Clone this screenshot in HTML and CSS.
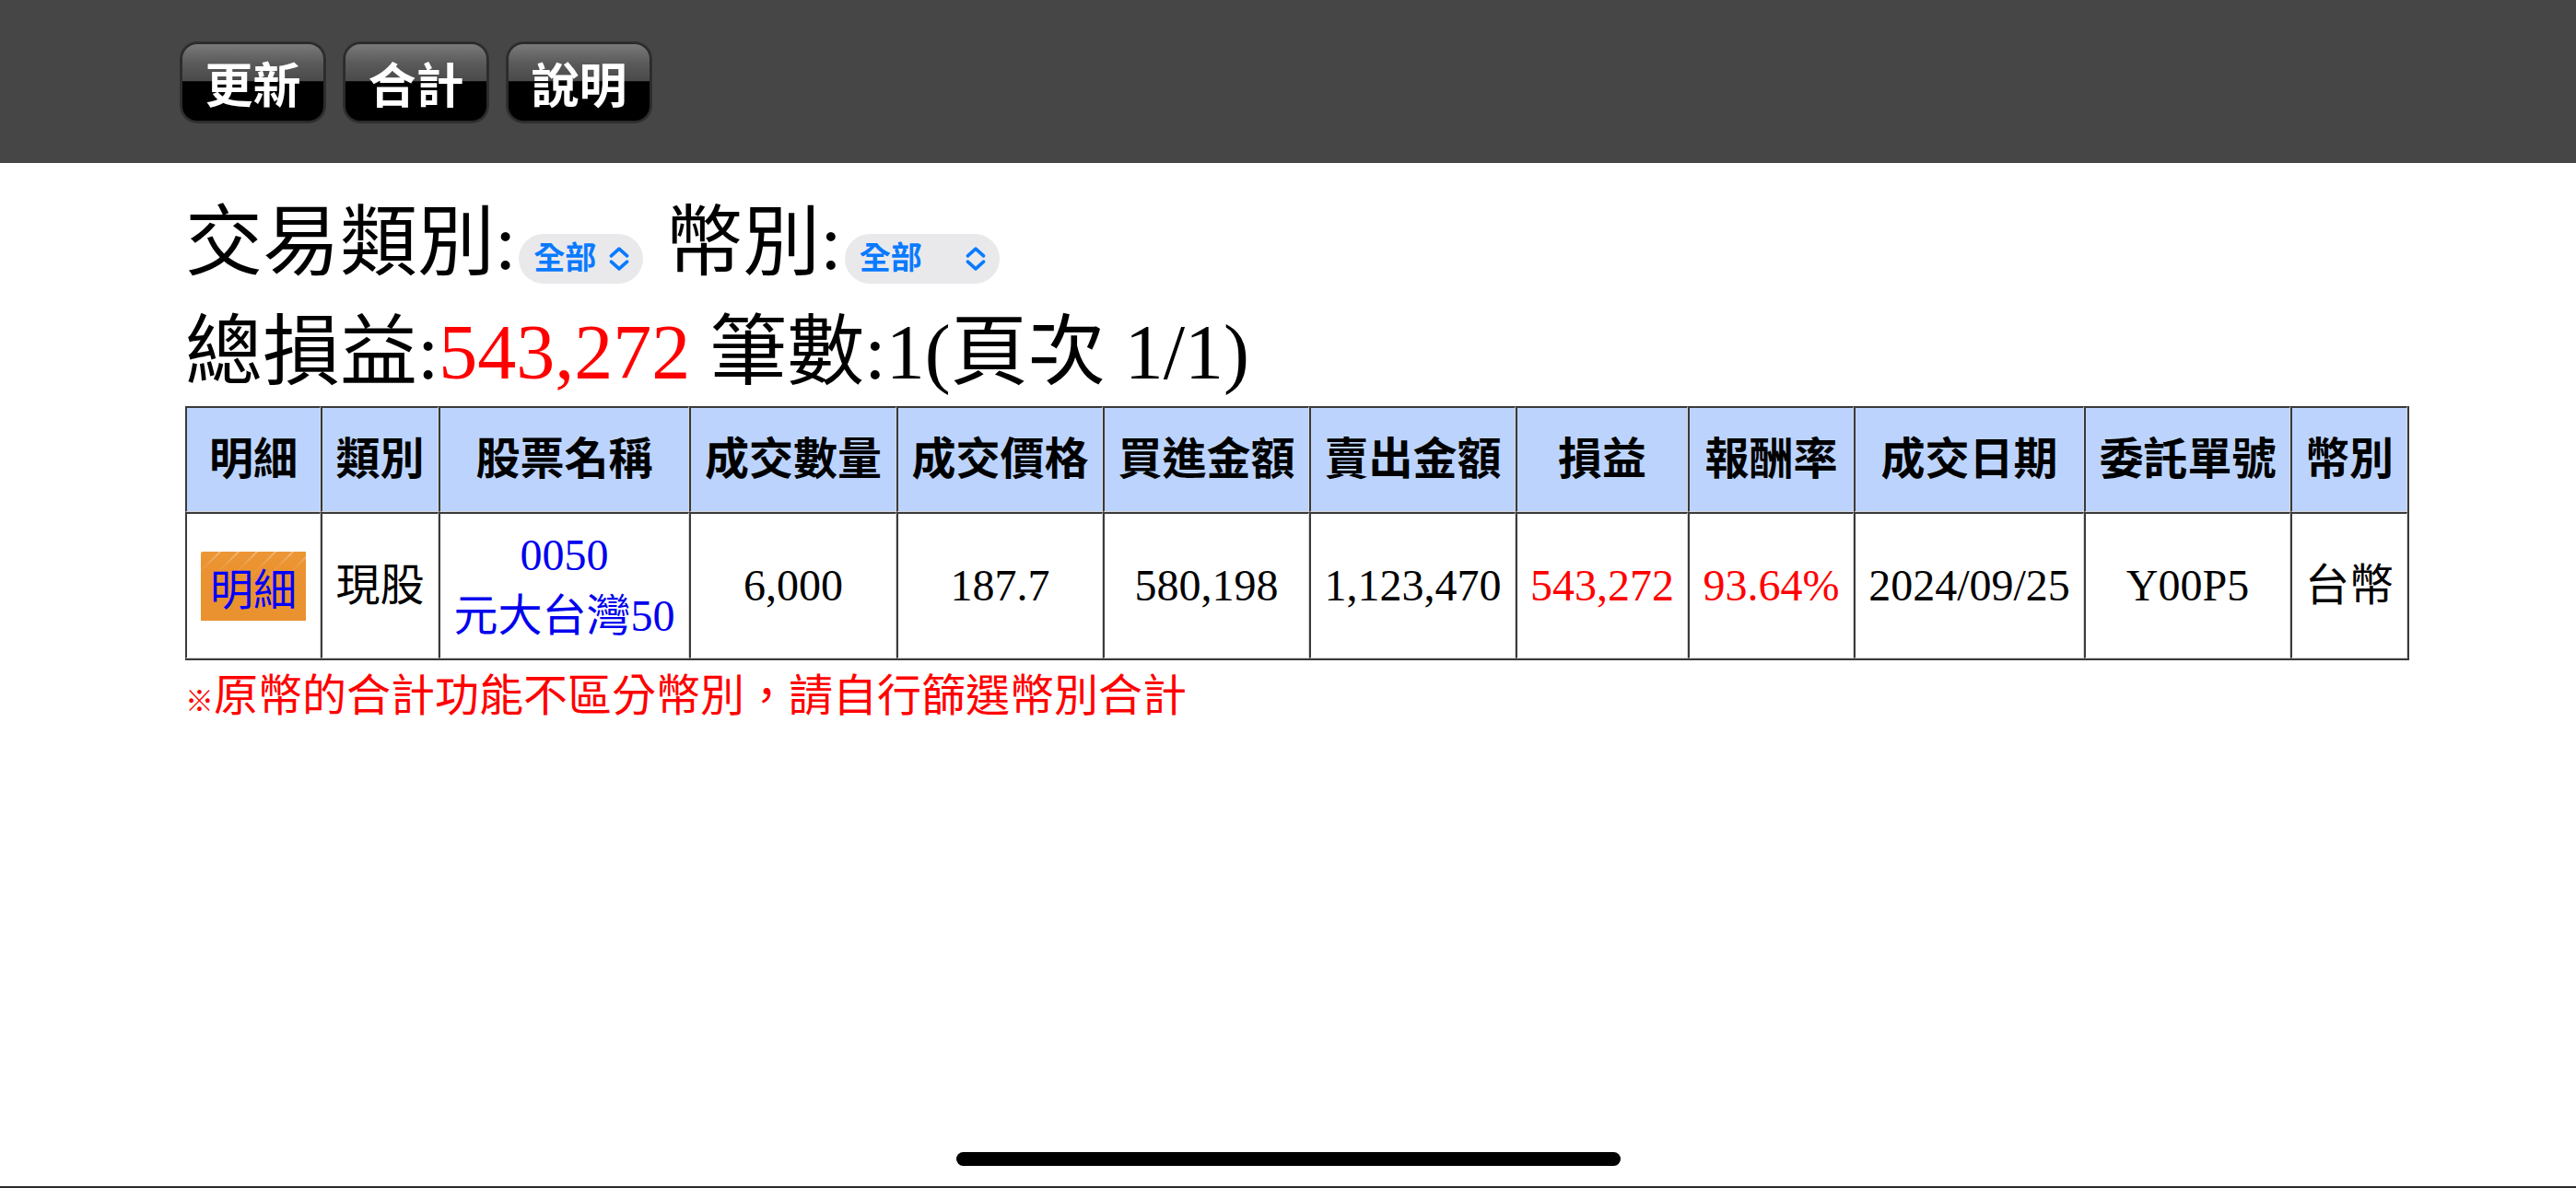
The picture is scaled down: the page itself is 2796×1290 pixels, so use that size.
FILE: index.html
```html
<!DOCTYPE html>
<html lang="zh-Hant">
<head>
<meta charset="utf-8">
<title>交易明細</title>
<link rel="stylesheet" href="styles.css">
</head>
<body>
<header class="topbar">
  <nav class="toolbar">
    <button class="tool-btn" type="button">更新</button>
    <button class="tool-btn" type="button">合計</button>
    <button class="tool-btn" type="button">說明</button>
  </nav>
</header>
<main class="content">
  <div class="filters">交易類別:<span class="sel sel-type"><span class="sel-text">全部</span><svg class="chev" viewBox="0 0 22 26" width="22" height="26"><polyline points="3,10 11,3 19,10"/><polyline points="3,16 11,23 19,16"/></svg></span> 幣別:<span class="sel sel-cur"><span class="sel-text">全部</span><svg class="chev" viewBox="0 0 22 26" width="22" height="26"><polyline points="3,10 11,3 19,10"/><polyline points="3,16 11,23 19,16"/></svg></span></div>
  <div class="summary">總損益:<span class="red">543,272</span> 筆數:1(頁次 1/1)</div>
  <table class="trades">
    <thead>
      <tr>
        <th class="w-detail">明細</th>
        <th class="w-kind">類別</th>
        <th class="w-name">股票名稱</th>
        <th class="w-qty">成交數量</th>
        <th class="w-price">成交價格</th>
        <th class="w-buy">買進金額</th>
        <th class="w-sell">賣出金額</th>
        <th class="w-pl">損益</th>
        <th class="w-ret">報酬率</th>
        <th class="w-date">成交日期</th>
        <th class="w-order">委託單號</th>
        <th class="w-cur">幣別</th>
      </tr>
    </thead>
    <tbody>
      <tr>
        <td><span class="detail-btn">明細</span></td>
        <td>現股</td>
        <td><a class="stock-link" href="#">0050<br>元大台灣50</a></td>
        <td>6,000</td>
        <td>187.7</td>
        <td>580,198</td>
        <td>1,123,470</td>
        <td class="red">543,272</td>
        <td class="red">93.64%</td>
        <td>2024/09/25</td>
        <td>Y00P5</td>
        <td>台幣</td>
      </tr>
    </tbody>
  </table>
  <p class="note"><span class="ref-mark">※</span>原幣的合計功能不區分幣別，請自行篩選幣別合計</p>
</main>
<div class="home-indicator"></div>
<div class="bottom-edge"></div>
</body>
</html>
```
FILE: styles.css
```css
* { box-sizing: border-box; }

html, body {
  margin: 0;
  padding: 0;
  background: #ffffff;
}

body {
  font-family: "Liberation Serif", "Noto Sans CJK TC", serif;
  color: #000;
  min-height: 1290px;
}

/* top bar */
.topbar {
  height: 177px;
  background: #464646;
  padding: 46px 0 0 196px;
}

.toolbar {
  display: flex;
  gap: 20px;
}

.tool-btn {
  width: 157px;
  height: 87px;
  padding: 0;
  border: 2px solid #2b2b2b;
  border-radius: 18px;
  background: linear-gradient(to bottom, #7a7a7a 0%, #5a5a5a 25%, #4a4a4a 48%, #000 49%, #000 100%);
  box-shadow: 0 0 0 1px rgba(0, 0, 0, 0.3);
  color: #fff;
  font-family: "Noto Sans CJK TC", sans-serif;
  font-size: 52px;
  font-weight: 700;
  line-height: 1;
  display: flex;
  align-items: center;
  justify-content: center;
}

/* content */
.content {
  padding: 27px 0 0 201px;
}

.filters {
  font-size: 84px;
  line-height: 120px;
  height: 120px;
  white-space: nowrap;
}

.sel {
  display: inline-flex;
  align-items: center;
  justify-content: space-between;
  height: 54px;
  border-radius: 27px;
  background: #e9e9eb;
  margin: 0 3px 0 3px;
  padding: 0 14px 0 16px;
  vertical-align: baseline;
}

.sel-type { width: 135px; }
.sel-cur { width: 168px; }

.sel-text {
  font-family: "Noto Sans CJK TC", sans-serif;
  font-size: 34px;
  font-weight: 700;
  line-height: 48px;
  color: #0a7aff;
  margin-bottom: 6px;
}

.chev {
  display: block;
  width: 24px;
  height: 28px;
  fill: none;
  stroke: #0a7aff;
  stroke-width: 3.4;
  stroke-linecap: round;
  stroke-linejoin: round;
}

.summary {
  font-size: 84px;
  line-height: 117px;
  white-space: nowrap;
}

.red { color: #ff0000; }

/* table */
.trades {
  border-collapse: separate;
  border-spacing: 0;
  table-layout: fixed;
  width: 2414px;
  border-right: 2px solid #3a3a3a;
  border-bottom: 2px solid #3a3a3a;
  font-size: 48px;
  line-height: 66px;
}

.trades th,
.trades td {
  border-top: 2px solid #3a3a3a;
  border-left: 2px solid #3a3a3a;
  border-right: 1px solid #d6d6d6;
  border-bottom: 1px solid #d6d6d6;
  text-align: center;
  vertical-align: middle;
  padding: 0 4px;
  white-space: nowrap;
}

.trades th {
  background: #bcd4fd;
  height: 115px;
  font-weight: 700;
}

.trades td {
  height: 159px;
}

.w-detail { width: 147px; }
.w-kind { width: 128px; }
.w-name { width: 272px; }
.w-qty { width: 225px; }
.w-price { width: 224px; }
.w-buy { width: 224px; }
.w-sell { width: 224px; }
.w-pl { width: 187px; }
.w-ret { width: 180px; }
.w-date { width: 250px; }
.w-order { width: 224px; }
.w-cur { width: 127px; }

.detail-btn {
  display: inline-block;
  vertical-align: middle;
  width: 114px;
  height: 75px;
  line-height: 75px;
  font-family: "Noto Sans CJK TC", sans-serif;
  font-size: 47px;
  color: #0000ff;
  background:
    linear-gradient(to bottom, rgba(234, 146, 47, 0) 0%, rgba(234, 146, 47, 0.75) 20%, #ea922f 45%),
    repeating-linear-gradient(135deg, rgba(255, 255, 255, 0.3) 0 2px, rgba(255, 255, 255, 0) 2px 14px),
    #ec9636;
}

.stock-link {
  color: #0000ee;
  text-decoration: none;
}

.note {
  margin: 6px 0 0;
  font-size: 48px;
  line-height: 66px;
  color: #ff0000;
}

.ref-mark {
  font-family: "Noto Sans CJK TC", sans-serif;
  font-size: 31px;
  font-weight: 700;
}

/* device overlays */
.home-indicator {
  position: fixed;
  left: 1038px;
  top: 1251px;
  width: 721px;
  height: 15px;
  border-radius: 8px;
  background: #000;
}

.bottom-edge {
  position: fixed;
  left: 0;
  right: 0;
  bottom: 0;
  height: 2px;
  background: #2a2a2a;
}
```
